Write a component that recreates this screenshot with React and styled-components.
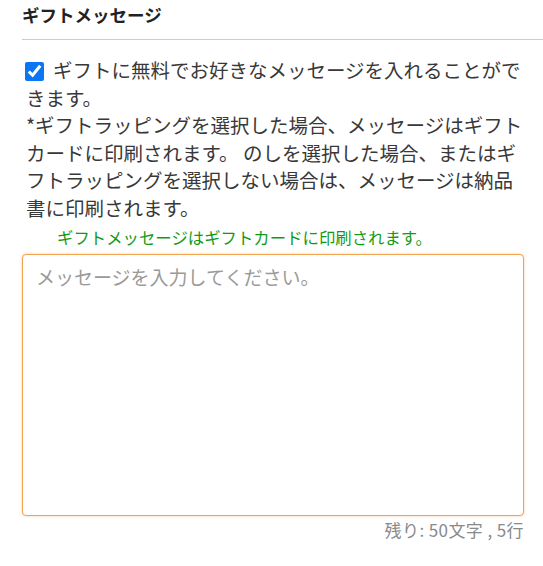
import React from "react";
import styled, { createGlobalStyle } from "styled-components";

const GlobalStyle = createGlobalStyle`
  body {
    margin: 0;
    background: #fff;
    font-family: "Noto Sans CJK JP", "Noto Sans", sans-serif;
    color: #333;
  }
`;

const Section = styled.section`
  width: 543px;
  padding-left: 22px;
  box-sizing: border-box;
`;

const Heading = styled.h2`
  margin: 0;
  padding: 4px 0 0;
  height: 35px;
  font-size: 17.5px;
  font-weight: 700;
  line-height: 22px;
  color: #222;
  border-bottom: 1px solid #ccc;
`;

const Body = styled.div`
  padding: 16px 19px 0 0;
`;

const Lead = styled.p`
  margin: 0;
  padding-left: 4px;
  font-size: 19.5px;
  line-height: 27.6px;
  color: #383838;
  white-space: nowrap;
`;

const Check = styled.input.attrs({ type: "checkbox" })`
  width: 19px;
  height: 19px;
  margin: 0 9px 0 -1px;
  vertical-align: -3px;
  accent-color: #0a76f6;
`;

const Note = styled.p`
  margin: 5px 0 0 35px;
  font-size: 16.4px;
  line-height: 20px;
  color: #129a12;
`;

const Message = styled.textarea`
  display: block;
  box-sizing: border-box;
  width: 502px;
  height: 262px;
  margin-top: 7px;
  padding: 10px 13px;
  border: 1px solid #f0a24e;
  border-radius: 4px;
  box-shadow: 0 0 3px rgba(240, 150, 60, 0.45);
  font-family: inherit;
  font-size: 19px;
  line-height: 24px;
  color: #333;
  resize: none;
  outline: none;

  &::placeholder {
    color: #9a9a9a;
  }
`;

const Counter = styled.div`
  width: 502px;
  margin-top: 2px;
  text-align: right;
  font-size: 17px;
  letter-spacing: 0.4px;
  line-height: 24px;
  color: #8a8a8a;
`;

export default function App() {
  return (
    <>
      <GlobalStyle />
      <Section>
        <Heading>ギフトメッセージ</Heading>
        <Body>
          <Lead>
            <Check defaultChecked />
            ギフトに無料でお好きなメッセージを入れることがで
            <br />
            きます。
            <br />
            *ギフトラッピングを選択した場合、メッセージはギフト
            <br />
            カードに印刷されます。 のしを選択した場合、またはギ
            <br />
            フトラッピングを選択しない場合は、メッセージは納品
            <br />
            書に印刷されます。
          </Lead>
          <Note>ギフトメッセージはギフトカードに印刷されます。</Note>
          <Message placeholder="メッセージを入力してください。" />
          <Counter>残り: 50文字 , 5行</Counter>
        </Body>
      </Section>
    </>
  );
}
